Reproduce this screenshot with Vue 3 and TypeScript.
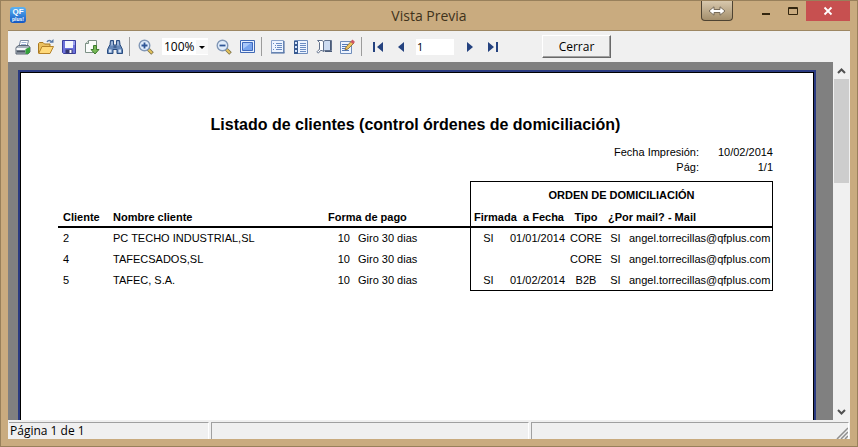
<script setup lang="ts">
import { ref } from 'vue'

interface ClientRow {
  id: number
  name: string
  payCode: number
  payName: string
  signed: string
  date: string
  type: string
  byMail: string
  mail: string
}

const zoomLevel = ref('100%')
const page = ref('1')

const rows: ClientRow[] = [
  { id: 2, name: 'PC TECHO INDUSTRIAL,SL', payCode: 10, payName: 'Giro 30 dias', signed: 'SI', date: '01/01/2014', type: 'CORE', byMail: 'SI', mail: 'angel.torrecillas@qfplus.com' },
  { id: 4, name: 'TAFECSADOS,SL', payCode: 10, payName: 'Giro 30 dias', signed: '', date: '', type: 'CORE', byMail: 'SI', mail: 'angel.torrecillas@qfplus.com' },
  { id: 5, name: 'TAFEC, S.A.', payCode: 10, payName: 'Giro 30 dias', signed: 'SI', date: '01/02/2014', type: 'B2B', byMail: 'SI', mail: 'angel.torrecillas@qfplus.com' },
]
</script>

<template>
  <div class="window">
    <header class="titlebar">
      <svg class="logo" viewBox="0 0 16 16" aria-hidden="true">
        <defs>
          <linearGradient id="logoFill" x1="0" y1="0" x2="0" y2="1">
            <stop offset="0" stop-color="#5db4f2" />
            <stop offset="1" stop-color="#1257c4" />
          </linearGradient>
        </defs>
        <rect width="16" height="16" rx="3" fill="url(#logoFill)" />
        <text x="8" y="7" text-anchor="middle" font-size="8" font-weight="bold" fill="#fff">QF</text>
        <text x="8" y="14" text-anchor="middle" font-size="5" font-weight="bold" fill="#fff">plus!</text>
      </svg>
      <h1 class="caption">Vista Previa</h1>
      <div class="controls">
        <button class="dock" aria-label="Mover">
          <svg width="18" height="10" viewBox="0 0 18 10"><path d="M1 5 6 .8V3.5h6V.8L17 5l-5 4.200V6.500H6v2.700z" fill="#fff" stroke="#776b59" stroke-width="1" /></svg>
        </button>
        <button class="ctl" aria-label="Minimizar">
          <svg width="12" height="10" viewBox="0 0 12 10"><path d="M2 8h8" stroke="#33260f" stroke-width="2" /></svg>
        </button>
        <button class="ctl" aria-label="Maximizar">
          <svg width="12" height="10" viewBox="0 0 12 10"><path d="M1.500 1.500h9v7h-9zM1 2.500h10" fill="none" stroke="#33260f" /></svg>
        </button>
        <button class="ctl close" aria-label="Cerrar ventana">
          <svg width="10" height="10" viewBox="0 0 10 10"><path d="m1.500 1.500 7 7m0-7-7 7" stroke="#fff" stroke-width="1.800" /></svg>
        </button>
      </div>
    </header>

    <main class="client">
      <div class="toolbar">
        <button class="tool" aria-label="Imprimir">
          <svg viewBox="0 0 16 16">
            <path d="M5.500 1.500h8L12 7.500H4z" fill="#fff" stroke="#7d8ba1" /><path d="M6.500 3.500h5M6 5.500h5" stroke="#9fb3d4" />
            <path d="m1 8.500 2.500-2h10l1.500 2V13l-2 2H1z" fill="#a9b2bd" stroke="#5c6675" />
            <path d="M1.500 9H12v2H1.500z" fill="#f6f7f9" /><path d="M2 12.500h8" stroke="#4b5563" stroke-width="2" /><path d="m10.500 10 4.500-2v5l-2 2h-2.500z" fill="#35a13b" />
          </svg>
        </button>
        <button class="tool" aria-label="Abrir">
          <svg viewBox="0 0 16 16">
            <path d="M.5 14V4.500l1-1H5L6.500 5H12v3" fill="#eac060" stroke="#a97820" />
            <path d="M.7 14.500 4 7.500h11.500l-3.500 7z" fill="#ffd97a" stroke="#b5822a" />
            <path d="M9 3c1-2 3.500-2 4.500 0" fill="none" stroke="#5879a8" stroke-width="1.300" /><path d="M11.500 3.800H15.500V0z" fill="#5879a8" />
          </svg>
        </button>
        <button class="tool" aria-label="Guardar">
          <svg viewBox="0 0 16 16">
            <path d="M1.500 1.500h13v13h-12l-1-1z" fill="#6d72dc" stroke="#3d409f" />
            <path d="M4 2h8v7H4z" fill="#f4f6fd" /><path d="M12 2h2v4h-2z" fill="#9ca2f0" />
            <path d="M4.500 10.500h7v4h-7z" fill="#34376f" /><path d="M8.500 11h2v3h-2z" fill="#fff" />
          </svg>
        </button>
        <button class="tool" aria-label="Exportar">
          <svg viewBox="0 0 16 16">
            <path d="M4.500 1.500h8v12h-11v-9z" fill="#fafcfb" stroke="#7c9085" /><path d="M1.500 4.500h3v-3" fill="#d4ded8" stroke="#7c9085" />
            <path d="M9.500 6.500h3v4H15l-4 4.500-4-4.500h2.500z" fill="#77b856" stroke="#3f7c30" />
          </svg>
        </button>
        <button class="tool" aria-label="Buscar">
          <svg viewBox="0 0 16 16">
            <path d="M3.500 1.500h3V6h3V1.500h3l.5 4 2.500 5v4H10v-4H6v4H.5v-4l2.500-5z" fill="#6688b8" stroke="#294c80" />
            <path d="M2 10.500h2.500v3H2zM11.500 10.500H14v3h-2.500zM4.500 2.500h1v4h-1zM10.500 2.500h1v4h-1z" fill="#d5e4f7" /><path d="M6.500 8h3" stroke="#1e3c6c" />
          </svg>
        </button>
        <span class="sep"></span>
        <button class="tool" aria-label="Acercar">
          <svg viewBox="0 0 16 16">
            <path d="m10 10 4.500 4.500" stroke="#7d7148" stroke-width="3.500" /><path d="m10.500 10.500 3.500 3.500" stroke="#e4c35c" stroke-width="2" />
            <circle cx="6.500" cy="6.500" r="5.300" fill="#e1edfb" stroke="#8197b6" stroke-width="1.400" /><path d="M3.500 6.500h6m-3-3v6" stroke="#305797" stroke-width="1.800" />
          </svg>
        </button>
        <div class="zoom">
          <select v-model="zoomLevel" aria-label="Zoom">
            <option>50%</option>
            <option>100%</option>
            <option>200%</option>
          </select>
          <svg width="12" height="14" viewBox="0 0 12 14" aria-hidden="true"><path d="M3 6h6L6 9z" /></svg>
        </div>
        <button class="tool" aria-label="Alejar">
          <svg viewBox="0 0 16 16">
            <path d="m10 10 4.500 4.500" stroke="#7d7148" stroke-width="3.500" /><path d="m10.500 10.500 3.500 3.500" stroke="#e4c35c" stroke-width="2" />
            <circle cx="6.500" cy="6.500" r="5.300" fill="#e1edfb" stroke="#8197b6" stroke-width="1.400" /><path d="M3.500 6.500h6" stroke="#305797" stroke-width="1.800" />
          </svg>
        </button>
        <button class="tool" aria-label="Pantalla completa">
          <svg viewBox="0 0 16 16">
            <path d="M1.500 1.500h14v12h-14z" fill="#e8f1ff" stroke="#4169b4" /><path d="M3.500 3.500h10v8h-10z" fill="#78a4ee" stroke="#3f69bd" /><path d="M4 4h8L4 10z" fill="#a9c8fa" />
          </svg>
        </button>
        <span class="sep"></span>
        <button class="tool" aria-label="Esquema">
          <svg viewBox="0 0 16 16">
            <path d="M1.500 1.500h12v12h-12z" fill="#edf4ff" stroke="#8aa3ca" /><path d="M1 14h13.500M14 2v12" stroke="#43649b" />
            <path d="M3 4.500h1m2 0h6M5 6.500h1m1 0h5M5 8.500h1m1 0h5M3 10.500h1m2 0h6" stroke="#6a8cc2" />
          </svg>
        </button>
        <button class="tool" aria-label="Miniaturas">
          <svg viewBox="0 0 16 16">
            <path d="M1.500 1.500h13v13h-13z" fill="#edf4ff" stroke="#6f8dbb" /><path d="M1 2h4v13H1z" fill="#385a91" />
            <path d="M2 3h2v2H2zm0 4h2v2H2zm0 4h2v2H2z" fill="#d7e5fb" /><path d="M7 4.500h6M7 6.500h6M7 8.500h6M7 10.500h6M7 12.500h6" stroke="#6a8cc2" />
          </svg>
        </button>
        <button class="tool" aria-label="Márgenes">
          <svg viewBox="0 0 16 16">
            <path d="M7.500 2.500 9 1.500h6.500v10H9l-1.500 1z" fill="#cddcf2" stroke="#61718c" /><path d="M1.500 1.500H6l1.500 1v10l-1.500-1H4.500l-2 2.500c-1.500 0-2-1.500-.5-2.500l1.500-1v-7z" fill="#fff" stroke="#61718c" />
            <path d="M14.500 2v9M9 12.500h7" stroke="#4a5b78" />
          </svg>
        </button>
        <button class="tool" aria-label="Editar">
          <svg viewBox="0 0 16 16">
            <path d="M1.500 2.500h11v12h-11z" fill="#edf4ff" stroke="#6f8dbb" /><path d="M3 5.500h6M3 7.500h4M3 9.500h3M3 11.500h7" stroke="#5479b5" />
            <path d="m6 11 1-3 5.500-6L15 4l-6 6z" fill="#edc35b" stroke="#7d632e" stroke-width=".8" /><path d="m11.500 3 2-2.500L16 3l-2 2z" fill="#cf5663" />
          </svg>
        </button>
        <span class="sep"></span>
        <button class="tool" aria-label="Primera página">
          <svg viewBox="0 0 16 16" fill="#24427f"><path d="M3 3h2v10H3zM13 3v10L7 8z" /></svg>
        </button>
        <button class="tool" aria-label="Página anterior">
          <svg viewBox="0 0 16 16" fill="#24427f"><path d="M11 3v10L5 8z" /></svg>
        </button>
        <input v-model="page" class="page-no" type="text" aria-label="Página" />
        <button class="tool" aria-label="Página siguiente">
          <svg viewBox="0 0 16 16" fill="#24427f"><path d="M5 3v10l6-5z" /></svg>
        </button>
        <button class="tool" aria-label="Última página">
          <svg viewBox="0 0 16 16" fill="#24427f"><path d="M3 3v10l6-5zM11 3h2v10h-2z" /></svg>
        </button>
        <button class="close-preview">Cerrar</button>
      </div>

      <div class="preview">
        <section class="desk">
          <article class="paper">
            <h2>Listado de clientes (control órdenes de domiciliación)</h2>
            <dl class="meta">
              <dt>Fecha Impresión:</dt>
              <dd>10/02/2014</dd>
              <dt>Pág:</dt>
              <dd>1/1</dd>
            </dl>
            <table>
              <colgroup>
                <col class="c-id" />
                <col />
                <col class="c-code" />
                <col class="c-pay" />
                <col class="c-small" />
                <col class="c-date" />
                <col class="c-small" />
                <col class="c-flag" />
                <col class="c-mail" />
              </colgroup>
              <thead>
                <tr class="group">
                  <td colspan="4"></td>
                  <th colspan="5" class="box-l box-r mid">ORDEN DE DOMICILIACIÓN</th>
                </tr>
                <tr class="names">
                  <th class="first">Cliente</th>
                  <th class="flush">Nombre cliente</th>
                  <th class="flush" colspan="2">Forma de pago</th>
                  <th class="box-l signed">Firmada</th>
                  <th class="num">a Fecha</th>
                  <th class="mid">Tipo</th>
                  <th class="box-r" colspan="2">¿Por mail? - Mail</th>
                </tr>
              </thead>
              <tbody>
                <tr v-for="row in rows" :key="row.id">
                  <td class="first">{{ row.id }}</td>
                  <td class="flush">{{ row.name }}</td>
                  <td class="num">{{ row.payCode }}</td>
                  <td>{{ row.payName }}</td>
                  <td class="box-l mid">{{ row.signed }}</td>
                  <td class="num">{{ row.date }}</td>
                  <td class="mid">{{ row.type }}</td>
                  <td class="mid">{{ row.byMail }}</td>
                  <td class="box-r mail">{{ row.mail }}</td>
                </tr>
              </tbody>
            </table>
          </article>
        </section>
        <div class="scrollbar">
          <button aria-label="Subir"><svg width="9" height="6" viewBox="0 0 9 6"><path d="m1 5 3.500-3.500L8 5" /></svg></button>
          <div class="track"><div class="thumb"></div></div>
          <button aria-label="Bajar"><svg width="9" height="6" viewBox="0 0 9 6"><path d="m1 1 3.500 3.500L8 1" /></svg></button>
        </div>
      </div>

      <footer class="status">
        <div class="panel">Página 1 de 1</div>
        <div class="panel wide"></div>
        <div class="panel wide">
          <svg class="grip" width="12" height="12" viewBox="0 0 12 12" aria-hidden="true"><path d="M1 12 12 1M5 12l7-7M9 12l3-3" stroke="#8f8f8f" stroke-width="1.500" /></svg>
        </div>
      </footer>
    </main>
  </div>
</template>

<style>
body {
  margin: 0;
}
</style>

<style scoped>
* {
  box-sizing: border-box;
}

button,
input,
select {
  margin: 0;
  padding: 0;
  border: 0;
  background: none;
  color: inherit;
  font: inherit;
}

svg {
  display: block;
}

.window {
  display: flex;
  flex-direction: column;
  height: 100vh;
  padding: 0 7px 7px;
  border: 1px solid #98805b;
  background: #c9ab7f;
  color: #000;
  font: 12px/16px "Open Sans", "Noto Sans", sans-serif;
}

.titlebar {
  display: grid;
  flex: none;
  grid-template-columns: 1fr auto 1fr;
  height: 29px;
}

.logo {
  width: 16px;
  height: 16px;
  margin: 6px 2px;
  font-family: "Liberation Sans", sans-serif;
}

.caption {
  margin: 0;
  color: #40321b;
  font: 14px/30px "Open Sans", sans-serif;
}

.controls {
  display: flex;
  justify-content: flex-end;
  height: 20px;
}

.controls button {
  display: grid;
  place-items: center;
}

.controls .dock {
  width: 32px;
  margin-right: 19px;
  border: 1px solid #4e4332;
  border-top: 0;
  border-radius: 0 0 4px 4px;
  background: linear-gradient(#d8c8ad, #a48f6c);
}

.controls .ctl {
  width: 27px;
}

.controls .close {
  width: 44px;
  background: #c75050;
}

.client {
  display: flex;
  flex: 1;
  flex-direction: column;
  min-height: 0;
  border-top: 1px solid #9d8763;
  background: #f0f0f0;
}

.toolbar {
  display: flex;
  flex: none;
  align-items: center;
  height: 31px;
  padding-left: 3px;
}

.tool {
  display: grid;
  place-items: center;
  width: 23px;
  height: 23px;
}

.tool svg {
  width: 16px;
  height: 16px;
}

.sep {
  width: 1px;
  height: 19px;
  margin: 0 4px 0 3px;
  background: #9c9c9c;
}

.zoom {
  display: flex;
  align-items: center;
  width: 46px;
  height: 17px;
  margin: 0 4px 0 5px;
  background: #fff;
}

.zoom select {
  width: 34px;
  padding-left: 2px;
  appearance: none;
  font-size: 12px;
}

.zoom svg {
  background: #f7f7f7;
}

.page-no {
  width: 38px;
  height: 16px;
  margin: 0 4px;
  padding: 0 1px;
  background: #fff;
  font-size: 11px;
}

.close-preview {
  width: 69px;
  height: 23px;
  margin-left: 38px;
  border: 1px solid;
  border-color: #fff #696969 #696969 #fff;
  box-shadow: inset -1px -1px #a0a0a0;
}

.preview {
  display: flex;
  flex: 1;
  min-height: 0;
}

.desk {
  flex: 1;
  min-width: 0;
  overflow: hidden;
  padding: 8px 17px 0 10px;
  background: #808080;
}

.paper {
  min-height: 100%;
  padding: 44px 41px 0 38px;
  border: 2px solid #2a3a80;
  border-bottom: 0;
  background: #fff;
  box-shadow: inset 0 1px #000, inset 1px 0 #000, inset -1px 0 #000;
  font: 11px/15px "Liberation Sans", Arial, sans-serif;
}

.paper h2 {
  margin: 0;
  font-size: 16px;
  line-height: 18px;
  text-align: center;
}

.meta {
  display: grid;
  grid-template-columns: 1fr 74px;
  margin: 11px 0 6px;
  text-align: right;
}

.meta dd {
  margin: 0;
}

table {
  width: 100%;
  border-spacing: 0;
  table-layout: fixed;
}

.c-id {
  width: 55px;
}

.c-code {
  width: 26px;
}

.c-pay {
  width: 116px;
}

.c-small {
  width: 36px;
}

.c-date {
  width: 62px;
}

.c-flag {
  width: 23px;
}

.c-mail {
  width: 146px;
}

th,
td {
  height: 20px;
  padding: 0 4px;
  text-align: left;
  white-space: nowrap;
}

tbody td {
  height: 21px;
}

.mid {
  padding: 0;
  text-align: center;
}

.num {
  text-align: right;
}

.first {
  padding-left: 5px;
}

.flush {
  padding-left: 0;
}

.signed {
  padding-left: 3px;
}

.mail {
  padding: 0 2px;
}

.box-l {
  border-left: 1px solid #000;
}

.box-r {
  border-right: 1px solid #000;
}

.group th {
  height: 27px;
  border-top: 1px solid #000;
}

.names th {
  border-bottom: 2px solid #000;
}

tbody tr:last-child .box-l,
tbody tr:last-child .box-l ~ td {
  border-bottom: 1px solid #000;
}

.scrollbar {
  display: flex;
  flex-direction: column;
  width: 17px;
  padding: 0 1px;
}

.scrollbar button {
  display: grid;
  place-items: center;
  height: 17px;
}

.scrollbar path {
  fill: none;
  stroke: #505050;
  stroke-width: 2;
}

.track {
  flex: 1;
}

.thumb {
  height: 32%;
  background: #cdcdcd;
}

.status {
  display: flex;
  flex: none;
  gap: 2px;
  padding: 2px 1px 0;
}

.panel {
  display: flex;
  flex: 200;
  align-items: flex-end;
  height: 17px;
  padding-left: 1px;
  border-top: 1px solid #a0a0a0;
  border-right: 1px solid #fff;
}

.panel.wide {
  flex: 319;
  border-left: 1px solid #a0a0a0;
}

.grip {
  flex: none;
  margin-left: auto;
}
</style>
